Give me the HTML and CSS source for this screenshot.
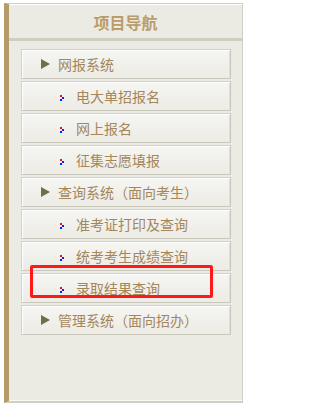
FILE: index.html
```html
<!DOCTYPE html>
<html lang="zh-CN">
<head>
<meta charset="utf-8">
<title>项目导航</title>
<link rel="stylesheet" href="styles.css">
</head>
<body>
<div class="nav">
  <div class="nav-head">项目导航</div>
  <ul class="nav-list">
    <li class="item cat"><svg class="tri" width="9" height="10" viewBox="0 0 9 10"><polygon points="0,0 9,5 0,10" fill="#6f6d4c"/></svg><span>网报系统</span></li>
    <li class="item sub"><svg class="dot" width="4" height="6" viewBox="0 0 4 6"><rect x="0" y="0" width="2" height="2" fill="#f01010"/><rect x="2" y="2" width="2" height="2" fill="#1020f0"/><rect x="0" y="4" width="2" height="2" fill="#1020f0"/></svg><span>电大单招报名</span></li>
    <li class="item sub"><svg class="dot" width="4" height="6" viewBox="0 0 4 6"><rect x="0" y="0" width="2" height="2" fill="#f01010"/><rect x="2" y="2" width="2" height="2" fill="#1020f0"/><rect x="0" y="4" width="2" height="2" fill="#1020f0"/></svg><span>网上报名</span></li>
    <li class="item sub"><svg class="dot" width="4" height="6" viewBox="0 0 4 6"><rect x="0" y="0" width="2" height="2" fill="#f01010"/><rect x="2" y="2" width="2" height="2" fill="#1020f0"/><rect x="0" y="4" width="2" height="2" fill="#1020f0"/></svg><span>征集志愿填报</span></li>
    <li class="item cat"><svg class="tri" width="9" height="10" viewBox="0 0 9 10"><polygon points="0,0 9,5 0,10" fill="#6f6d4c"/></svg><span>查询系统（面向考生）</span></li>
    <li class="item sub"><svg class="dot" width="4" height="6" viewBox="0 0 4 6"><rect x="0" y="0" width="2" height="2" fill="#f01010"/><rect x="2" y="2" width="2" height="2" fill="#1020f0"/><rect x="0" y="4" width="2" height="2" fill="#1020f0"/></svg><span>准考证打印及查询</span></li>
    <li class="item sub"><svg class="dot" width="4" height="6" viewBox="0 0 4 6"><rect x="0" y="0" width="2" height="2" fill="#f01010"/><rect x="2" y="2" width="2" height="2" fill="#1020f0"/><rect x="0" y="4" width="2" height="2" fill="#1020f0"/></svg><span>统考考生成绩查询</span></li>
    <li class="item sub"><svg class="dot" width="4" height="6" viewBox="0 0 4 6"><rect x="0" y="0" width="2" height="2" fill="#f01010"/><rect x="2" y="2" width="2" height="2" fill="#1020f0"/><rect x="0" y="4" width="2" height="2" fill="#1020f0"/></svg><span>录取结果查询</span></li>
    <li class="item cat"><svg class="tri" width="9" height="10" viewBox="0 0 9 10"><polygon points="0,0 9,5 0,10" fill="#6f6d4c"/></svg><span>管理系统（面向招办）</span></li>
  </ul>
  <div class="highlight"></div>
</div>
</body>
</html>
```

FILE: styles.css
```css
html, body {
  margin: 0;
  padding: 0;
  background: #ffffff;
}

body {
  font-family: "Noto Sans CJK SC", "Noto Sans", sans-serif;
}

.nav {
  position: relative;
  box-sizing: border-box;
  margin: 3px 0 0 4px;
  width: 239px;
  height: 400px;
  background: #ecebe3;
  border-left: 5px solid #b49b69;
  border-right: 1px solid #cfcfc2;
  border-top: 1px solid #cfcfc2;
  border-bottom: 2px solid #cfcfc2;
  box-shadow: inset 0 1px 0 #ffffff, inset 0 -1px 0 #fbfbf6;
}

.nav-head {
  height: 33px;
  border-bottom: 3px solid #cdcdc0;
  display: flex;
  align-items: center;
  justify-content: center;
  font-size: 16px;
  font-weight: bold;
  color: #bb9c6c;
  letter-spacing: 0;
  padding-top: 1px;
  box-sizing: content-box;
}

.nav-list {
  list-style: none;
  margin: 0;
  padding: 8px 0 0 12px;
  display: flex;
  flex-direction: column;
  gap: 2px;
}

.item {
  box-sizing: border-box;
  width: 210px;
  height: 30px;
  display: flex;
  align-items: center;
  border: 1px solid #d3d2c6;
  border-right-color: #c6c5b8;
  border-bottom-color: #c9c8bb;
  background: linear-gradient(#f6f6f2, #ecebe5);
  box-shadow: inset 1px 1px 0 #ffffff, inset -1px 0 0 #e2e1d8;
  font-size: 14px;
  color: #a5865a;
  white-space: nowrap;
}

.cat {
  padding-left: 19px;
}

.cat .tri {
  flex: none;
  margin-right: 8px;
}

.sub {
  padding-left: 38px;
}

.sub .dot {
  flex: none;
  margin-right: 12px;
  margin-top: 3px;
}

.highlight {
  position: absolute;
  left: 21px;
  top: 261px;
  width: 183px;
  height: 33px;
  box-sizing: border-box;
  border: 3px solid #ff1a1a;
  border-radius: 2px;
  pointer-events: none;
}
```
